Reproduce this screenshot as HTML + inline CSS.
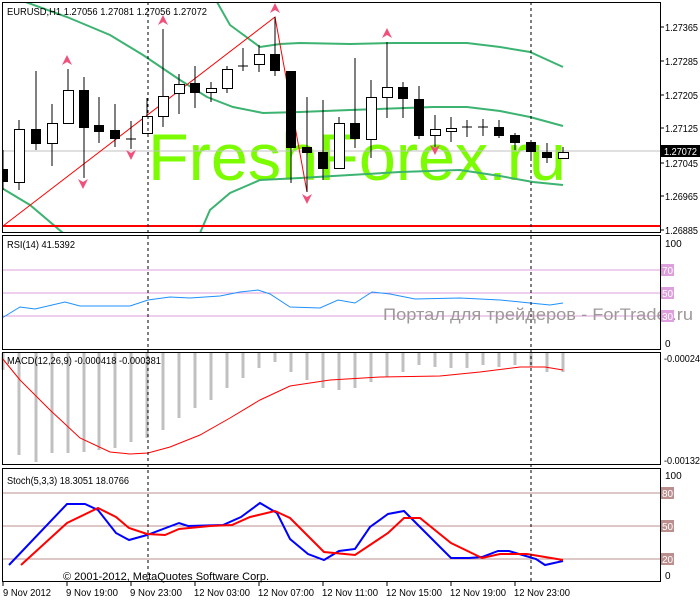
<!DOCTYPE html>
<html><head><meta charset="utf-8"><style>
html,body{margin:0;padding:0;background:#fff;width:700px;height:600px;overflow:hidden}
svg{display:block}
text{font-family:"Liberation Sans",sans-serif;font-size:10px;fill:#000}
</style></head><body>
<svg width="700" height="600" viewBox="0 0 700 600" xmlns="http://www.w3.org/2000/svg">
<rect width="700" height="600" fill="#fff"/>

<!-- watermark -->
<text x="148" y="180" style="font-size:66px;fill:#7cfc00" textLength="418" lengthAdjust="spacingAndGlyphs">FreshForex.ru</text>

<!-- main panel -->
<g clip-path="url(#cm)">
<clipPath id="cm"><rect x="2" y="2" width="658" height="230"/></clipPath>
<line x1="2" y1="151" x2="660" y2="151" stroke="#c0c0c0"/>
<g fill="none" stroke="#3cb371" stroke-width="2">
<polyline points="200,233 210,210 230,193 260,180 300,178 350,175 400,172 460,170 500,176 533,182 563,185"/>
<polyline points="0,187 30,205 63,233"/>
<polyline points="20,0 67,17 110,35 143,55 180,80 207,97 233,107 263,113 300,112 350,110 433,107 467,107 500,111 530,117 563,126"/>
<polyline points="217,2 230,25 260,47 280,44 300,43 350,44 393,43 467,43 500,47 530,52 563,67"/>
</g>
<line x1="2" y1="226" x2="660" y2="226" stroke="#f00" stroke-width="2"/>
<polyline points="3,226 275,17 307,192" fill="none" stroke="#f00" stroke-width="1"/>
<g stroke="#000" stroke-width="1" shape-rendering="crispEdges">
<path d="M3 150V190M19 120V190M36 71V150M52 104V166M68 69V123M84 77V178M99 97V143M115 104V147M131 121V149M147 98V133M163 29V127M179 74V114M195 66V108M211 82V102M227 66V93M243 48V71M259 45V72M275 17V76M291 71V183M307 97V192M323 100V180M339 117V168M355 58V148M371 80V158M387 42V118M403 82V118M419 86V139M435 115V147M451 117V142M467 120V137M483 119V136M499 120V138M515 133V150M531 140V160M547 143V163M563 147V158"/>
<path d="M126 139H136M238 66H248M462 127H472M478 127H488"/>
</g>
<g fill="#000" shape-rendering="crispEdges">
<rect x="-2" y="169" width="10" height="13"/>
<rect x="31" y="129" width="10" height="15"/>
<rect x="79" y="90" width="10" height="38"/>
<rect x="94" y="125" width="10" height="7"/>
<rect x="110" y="130" width="10" height="9"/>
<rect x="190" y="83" width="10" height="10"/>
<rect x="270" y="54" width="10" height="17"/>
<rect x="286" y="71" width="10" height="77"/>
<rect x="302" y="147" width="10" height="6"/>
<rect x="318" y="152" width="10" height="17"/>
<rect x="350" y="123" width="10" height="16"/>
<rect x="398" y="87" width="10" height="12"/>
<rect x="414" y="99" width="10" height="37"/>
<rect x="494" y="127" width="10" height="9"/>
<rect x="510" y="135" width="10" height="8"/>
<rect x="526" y="142" width="10" height="10"/>
<rect x="542" y="152" width="10" height="6"/>
</g>
<g fill="#fff" stroke="#000" shape-rendering="crispEdges">
<rect x="14.5" y="129.5" width="10" height="53"/>
<rect x="47.5" y="123.5" width="10" height="20"/>
<rect x="63.5" y="90.5" width="10" height="33"/>
<rect x="142.5" y="116.5" width="10" height="17"/>
<rect x="158.5" y="96.5" width="10" height="20"/>
<rect x="174.5" y="84.5" width="10" height="9"/>
<rect x="206.5" y="88.5" width="10" height="4"/>
<rect x="222.5" y="69.5" width="10" height="19"/>
<rect x="254.5" y="54.5" width="10" height="10"/>
<rect x="334.5" y="123.5" width="10" height="45"/>
<rect x="366.5" y="97.5" width="10" height="42"/>
<rect x="382.5" y="87.5" width="10" height="10"/>
<rect x="430.5" y="129.5" width="10" height="6"/>
<rect x="446.5" y="128.5" width="10" height="3"/>
<rect x="558.5" y="152.5" width="10" height="6"/>
</g>
<g fill="#f0507a">
<path d="M67 55l5 10-5-3-5 3z"/><path d="M163 15l5 10-5-3-5 3z"/><path d="M275 3l5 10-5-3-5 3z"/><path d="M387 28l5 10-5-3-5 3z"/>
<path d="M83 189l5-10-5 3-5-3z"/><path d="M131 160l5-10-5 3-5-3z"/><path d="M307 204l5-10-5 3-5-3z"/><path d="M435 155l5-10-5 3-5-3z"/>
</g>
</g>
<text x="7" y="15" textLength="200" lengthAdjust="spacingAndGlyphs">EURUSD,H1  1.27056 1.27081 1.27056 1.27072</text>

<!-- RSI -->
<g stroke="#dda0dd"><line x1="2" y1="270" x2="660" y2="270"/><line x1="2" y1="293" x2="660" y2="293"/><line x1="2" y1="316" x2="660" y2="316"/></g>
<polyline fill="none" stroke="#1e90ff" points="2,318 20,307 35,309 65,302 80,306 105,306 130,306 148,300 170,297 190,298 220,296 240,292 258,290 270,294 290,307 320,308 338,300 355,303 372,292 390,294 415,299 460,298 500,300 530,303 550,305 563,303"/>
<text x="7" y="248" textLength="68" lengthAdjust="spacingAndGlyphs">RSI(14) 41.5392</text>
<text x="383" y="320" style="font-size:17px;fill:#a09898" textLength="310" lengthAdjust="spacingAndGlyphs">Портал для трейдеров - ForTrader.ru</text>

<!-- MACD -->
<g stroke="#c0c0c0" stroke-width="3" shape-rendering="crispEdges">
<path d="M3 353V370M19 353V455M36 353V462M52 353V453M68 353V453M84 353V452M99 353V450M115 353V448M131 353V442M147 353V438M163 353V430M179 353V418M195 353V408M211 353V400M227 353V388M243 353V378M259 353V368M275 353V362M291 353V372M307 353V380M323 353V388M339 353V390M355 353V388M371 353V382M387 353V377M403 353V372M419 353V365M435 353V367M451 353V368M467 353V368M483 353V365M499 353V367M515 353V365M531 353V367M547 353V372M563 353V372"/>
</g>
<polyline fill="none" stroke="#f00" points="2,358 20,380 50,410 80,438 110,452 130,454 148,453 170,447 200,435 230,418 260,400 290,386 330,380 380,377 440,376 480,372 520,367 545,367 563,370"/>
<text x="7" y="364" textLength="154" lengthAdjust="spacingAndGlyphs">MACD(12,26,9) -0.000418 -0.000381</text>

<!-- Stoch -->
<g stroke="#bc8f8f"><line x1="2" y1="493" x2="660" y2="493"/><line x1="2" y1="526" x2="660" y2="526"/><line x1="2" y1="559" x2="660" y2="559"/></g>
<polyline fill="none" stroke="#00f" stroke-width="2" points="9,565 67,504 85,504 98,510 116,533 129,540 147,535 179,523 188,526 223,525 241,517 260,503 277,513 290,539 308,554 324,560 339,551 355,549 370,527 388,514 404,511 420,527 451,558 469,558 482,557 498,551 509,551 536,559 545,565 563,561"/>
<polyline fill="none" stroke="#f00" stroke-width="2" points="21,565 67,523 98,508 116,517 129,528 147,534 165,535 179,529 210,526 232,525 250,517 275,511 290,518 324,552 355,555 388,533 404,518 420,518 451,543 482,558 500,554 527,554 563,560"/>
<text x="7" y="484" textLength="122" lengthAdjust="spacingAndGlyphs">Stoch(5,3,3) 18.3051 18.0766</text>
<text x="63" y="580" style="font-size:11px" textLength="206" lengthAdjust="spacingAndGlyphs">© 2001-2012, MetaQuotes Software Corp.</text>

<g stroke="#000" stroke-dasharray="3,3"><line x1="148" y1="2" x2="148" y2="582"/><line x1="531" y1="2" x2="531" y2="582"/></g>

<g fill="none" stroke="#000" shape-rendering="crispEdges">
<rect x="2.5" y="2.5" width="658" height="230"/>
<rect x="2.5" y="235.5" width="658" height="114"/>
<rect x="2.5" y="352.5" width="658" height="112"/>
<rect x="2.5" y="468.5" width="658" height="113"/>
<path d="M660 27h4M660 61h4M660 95h4M660 128h4M660 163h4M660 196h4M660 230h4"/>
<path d="M3 582v4M67 582v4M131 582v4M195 582v4M259 582v4M323 582v4M387 582v4M451 582v4M515 582v4"/>
</g>

<g>
<text x="665" y="31" textLength="33" lengthAdjust="spacingAndGlyphs">1.27365</text>
<text x="665" y="65" textLength="33" lengthAdjust="spacingAndGlyphs">1.27285</text>
<text x="665" y="99" textLength="33" lengthAdjust="spacingAndGlyphs">1.27205</text>
<text x="665" y="132" textLength="33" lengthAdjust="spacingAndGlyphs">1.27125</text>
<text x="665" y="167" textLength="33" lengthAdjust="spacingAndGlyphs">1.27045</text>
<text x="665" y="200" textLength="33" lengthAdjust="spacingAndGlyphs">1.26965</text>
<text x="665" y="234" textLength="33" lengthAdjust="spacingAndGlyphs">1.26885</text>
</g>
<rect x="661" y="145" width="39" height="12" fill="#000"/>
<text x="664" y="155" style="fill:#fff" textLength="33" lengthAdjust="spacingAndGlyphs">1.27072</text>
<text x="665" y="247">100</text><text x="665" y="347">0</text>
<rect x="661" y="264" width="13" height="12" fill="#dda0dd"/><text x="662" y="274" style="fill:#fff">70</text>
<rect x="661" y="287" width="13" height="12" fill="#dda0dd"/><text x="662" y="297" style="fill:#fff">50</text>
<rect x="661" y="310" width="13" height="12" fill="#dda0dd"/><text x="662" y="320" style="fill:#fff">30</text>
<text x="664" y="362" textLength="36" lengthAdjust="spacingAndGlyphs">-0.00024</text>
<text x="664" y="464" textLength="36" lengthAdjust="spacingAndGlyphs">-0.00132</text>
<text x="665" y="479">100</text><text x="665" y="579">0</text>
<rect x="661" y="487" width="13" height="12" fill="#bc8f8f"/><text x="662" y="497" style="fill:#fff">80</text>
<rect x="661" y="520" width="13" height="12" fill="#bc8f8f"/><text x="662" y="530" style="fill:#fff">50</text>
<rect x="661" y="553" width="13" height="12" fill="#bc8f8f"/><text x="662" y="563" style="fill:#fff">20</text>

<g>
<text x="3" y="596" textLength="48" lengthAdjust="spacingAndGlyphs">9 Nov 2012</text>
<text x="66" y="596" textLength="52" lengthAdjust="spacingAndGlyphs">9 Nov 19:00</text>
<text x="130" y="596" textLength="52" lengthAdjust="spacingAndGlyphs">9 Nov 23:00</text>
<text x="194" y="596" textLength="56" lengthAdjust="spacingAndGlyphs">12 Nov 03:00</text>
<text x="258" y="596" textLength="56" lengthAdjust="spacingAndGlyphs">12 Nov 07:00</text>
<text x="322" y="596" textLength="56" lengthAdjust="spacingAndGlyphs">12 Nov 11:00</text>
<text x="386" y="596" textLength="56" lengthAdjust="spacingAndGlyphs">12 Nov 15:00</text>
<text x="450" y="596" textLength="56" lengthAdjust="spacingAndGlyphs">12 Nov 19:00</text>
<text x="514" y="596" textLength="56" lengthAdjust="spacingAndGlyphs">12 Nov 23:00</text>
</g>
</svg>
</body></html>
